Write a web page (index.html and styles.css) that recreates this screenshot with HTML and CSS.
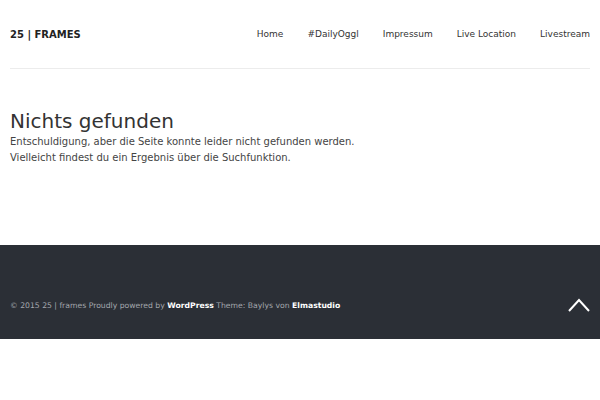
FILE: index.html
```html
<!DOCTYPE html>
<html lang="de">
<head>
<meta charset="utf-8">
<link rel="stylesheet" href="styles.css">
</head>
<body>
<header class="site-header">
  <div class="logo">25 | FRAMES</div>
  <nav class="nav">
    <a href="#">Home</a>
    <a href="#">#DailyOggl</a>
    <a href="#">Impressum</a>
    <a href="#">Live Location</a>
    <a href="#">Livestream</a>
  </nav>
</header>
<main class="content">
  <h1 class="title">Nichts gefunden</h1>
  <p class="text">Entschuldigung, aber die Seite konnte leider nicht gefunden werden.<br>Vielleicht findest du ein Ergebnis über die Suchfunktion.</p>
</main>
<footer class="site-footer">
  <div class="credits">© 2015 25 | frames Proudly powered by <b>WordPress</b> Theme: Baylys von <b>Elmastudio</b></div>
  <a class="top" href="#"><svg width="22" height="14" viewBox="0 0 22 14"><polyline points="1,13 11,2 21,13" fill="none" stroke="#fff" stroke-width="2"/></svg></a>
</footer>
</body>
</html>
```
FILE: styles.css
```css
* { box-sizing: border-box; }
html, body { margin: 0; padding: 0; background: #fff; }
body { font-family: "DejaVu Sans", Verdana, sans-serif; color: #333; }
.site-header {
  margin: 0 10px;
  height: 69px;
  border-bottom: 1px solid #ececec;
  display: flex;
  align-items: center;
  justify-content: space-between;
}
.logo { font-weight: bold; font-size: 10px; color: #222; padding-top: 1px; }
.nav { display: flex; gap: 24px; }
.nav a { font-size: 9px; color: #333; text-decoration: none; }
.content { padding: 41px 10px 0; height: 176px; }
.title { margin: 0; font-weight: normal; font-size: 20px; line-height: 22px; color: #333; }
.text { margin: 2px 0 0; font-size: 10px; line-height: 16px; color: #444; }
.site-footer {
  background: #2b2f36;
  height: 94px;
  display: flex;
  align-items: center;
  justify-content: space-between;
  padding: 26px 10px 0;
}
.credits { font-size: 7.7px; color: #a3a7ad; }
.credits b { color: #fff; }
.top { display: block; line-height: 0; }
```
